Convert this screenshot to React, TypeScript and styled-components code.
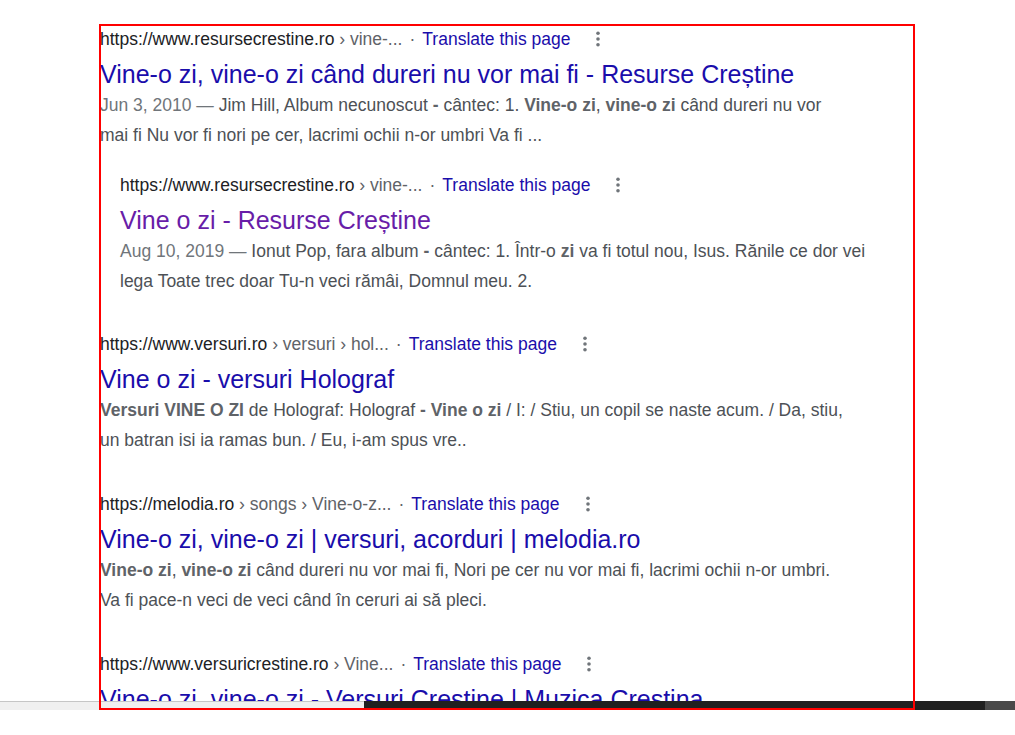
import React, {FC, ReactNode} from "react";
import styled, {createGlobalStyle} from "styled-components";

const GlobalStyle = createGlobalStyle`
  html, body {
    margin: 0;
    padding: 0;
    background: #fff;
  }
  body {
    font-family: "Liberation Sans", Arial, sans-serif;
  }
`

interface IResult {
    site: string
    crumbs: string
    title: string
    visited?: boolean
    nested?: boolean
    gap?: number
    snippet?: ReactNode
}

const Page = styled.div`
  position: relative;
  width: 1015px;
  height: 735px;
  display: flex;
  flex-direction: column;
  overflow: hidden;
  background: #fff;
`

const Viewport = styled.div`
  height: 701px;
  overflow: hidden;
  padding: 24px 0 0 100px;
  box-sizing: border-box;
`

const List = styled.div`
  display: flex;
  flex-direction: column;
`

const Result = styled.div<{ nested?: boolean, gap: number }>`
  display: flex;
  flex-direction: column;
  padding-left: ${p => p.nested ? 20 : 0}px;
  margin-top: ${p => p.gap}px;

  &:first-child {
    margin-top: 0;
  }
`

const UrlRow = styled.div`
  height: 30px;
  display: flex;
  align-items: center;
  font-size: 17.5px;
  color: #202124;
  white-space: nowrap;
`

const Crumbs = styled.span`
  color: #5f6368;
  white-space: pre;
`

const Sep = styled.span`
  color: #5f6368;
  padding: 0 7px 0 7px;
`

const Translate = styled.a`
  color: #1a0dab;
  text-decoration: none;
`

const More = styled.span`
  display: inline-flex;
  margin-left: 25px;
  width: 6px;
  height: 18px;
  align-items: center;
  justify-content: center;
`

const Title = styled.a<{ visited?: boolean }>`
  display: block;
  margin-top: 3px;
  font-size: 25px;
  line-height: 34px;
  color: ${p => p.visited ? '#681da8' : '#1a0dab'};
  text-decoration: none;
  white-space: nowrap;
`

const Snippet = styled.div`
  width: 750px;
  font-size: 17.5px;
  line-height: 29.5px;
  color: #4d5156;
`

const Date = styled.span`
  color: #70757a;
`

const Em = styled.b`
  color: #5f6368;
  font-weight: bold;
`

const ScrollBar = styled.div`
  height: 9px;
  display: flex;
`

const ScrollPart = styled.div<{ w: number, bg: string, edge?: boolean }>`
  width: ${p => p.w}px;
  background: ${p => p.bg};
  box-sizing: border-box;
  border-top: ${p => p.edge ? '1px solid #c6c6c6' : 'none'};
`

// red annotation frame drawn over the screenshot
const Frame = styled.div`
  position: absolute;
  left: 99px;
  top: 24px;
  width: 816px;
  height: 686px;
  border: 2px solid #ff0000;
  box-sizing: border-box;
  pointer-events: none;
`

const MoreIcon: FC = () => <More>
    <svg width="6" height="18" viewBox="0 0 6 18">
        <circle cx="3" cy="3.3" r="1.8" fill="#70757a"/>
        <circle cx="3" cy="9" r="1.8" fill="#70757a"/>
        <circle cx="3" cy="14.7" r="1.8" fill="#70757a"/>
    </svg>
</More>

const results: IResult[] = [
    {
        site: 'https://www.resursecrestine.ro',
        crumbs: ' › vine-...',
        title: 'Vine-o zi, vine-o zi când dureri nu vor mai fi - Resurse Creștine',
        snippet: <>
            <Date>Jun 3, 2010 — </Date>Jim Hill, Album necunoscut <Em>-</Em> cântec: 1. <Em>Vine-o zi</Em>, <Em>vine-o
            zi</Em> când dureri nu vor mai fi Nu vor fi nori pe cer, lacrimi ochii n-or umbri Va fi ...
        </>
    },
    {
        site: 'https://www.resursecrestine.ro',
        crumbs: ' › vine-...',
        title: 'Vine o zi - Resurse Creștine',
        visited: true,
        nested: true,
        gap: 20,
        snippet: <>
            <Date>Aug 10, 2019 — </Date>Ionut Pop, fara album <Em>-</Em> cântec: 1. Într-o <Em>zi</Em> va fi totul
            nou, Isus. Rănile ce dor vei lega Toate trec doar Tu-n veci rămâi, Domnul meu. 2.
        </>
    },
    {
        site: 'https://www.versuri.ro',
        crumbs: ' › versuri › hol...',
        title: 'Vine o zi - versuri Holograf',
        gap: 33,
        snippet: <>
            <Em>Versuri VINE O ZI</Em> de Holograf: Holograf <Em>- Vine o zi</Em> / I: / Stiu, un copil se naste
            acum. / Da, stiu, un batran isi ia ramas bun. / Eu, i-am spus vre..
        </>
    },
    {
        site: 'https://melodia.ro',
        crumbs: ' › songs › Vine-o-z...',
        title: 'Vine-o zi, vine-o zi | versuri, acorduri | melodia.ro',
        snippet: <>
            <Em>Vine-o zi</Em>, <Em>vine-o zi</Em> când dureri nu vor mai fi, Nori pe cer nu vor mai fi, lacrimi
            ochii n-or umbri. Va fi pace-n veci de veci când în ceruri ai să pleci.
        </>
    },
    {
        site: 'https://www.versuricrestine.ro',
        crumbs: ' › Vine...',
        title: 'Vine-o zi, vine-o zi - Versuri Crestine | Muzica Crestina',
    },
]

export default function App() {
    return <Page>
        <GlobalStyle/>
        <Viewport>
            <List>
                {results.map((r, i) => <Result key={i} nested={r.nested} gap={r.gap ?? 34}>
                    <UrlRow>
                        {r.site}<Crumbs>{r.crumbs}</Crumbs>
                        <Sep>·</Sep>
                        <Translate href="#">Translate this page</Translate>
                        <MoreIcon/>
                    </UrlRow>
                    <Title href="#" visited={r.visited}>{r.title}</Title>
                    {r.snippet && <Snippet>{r.snippet}</Snippet>}
                </Result>)}
            </List>
        </Viewport>
        <ScrollBar>
            <ScrollPart w={364} bg="#f0f0f0" edge/>
            <ScrollPart w={621} bg="#202020"/>
            <ScrollPart w={30} bg="#4a4a4a"/>
        </ScrollBar>
        <Frame/>
    </Page>
}
